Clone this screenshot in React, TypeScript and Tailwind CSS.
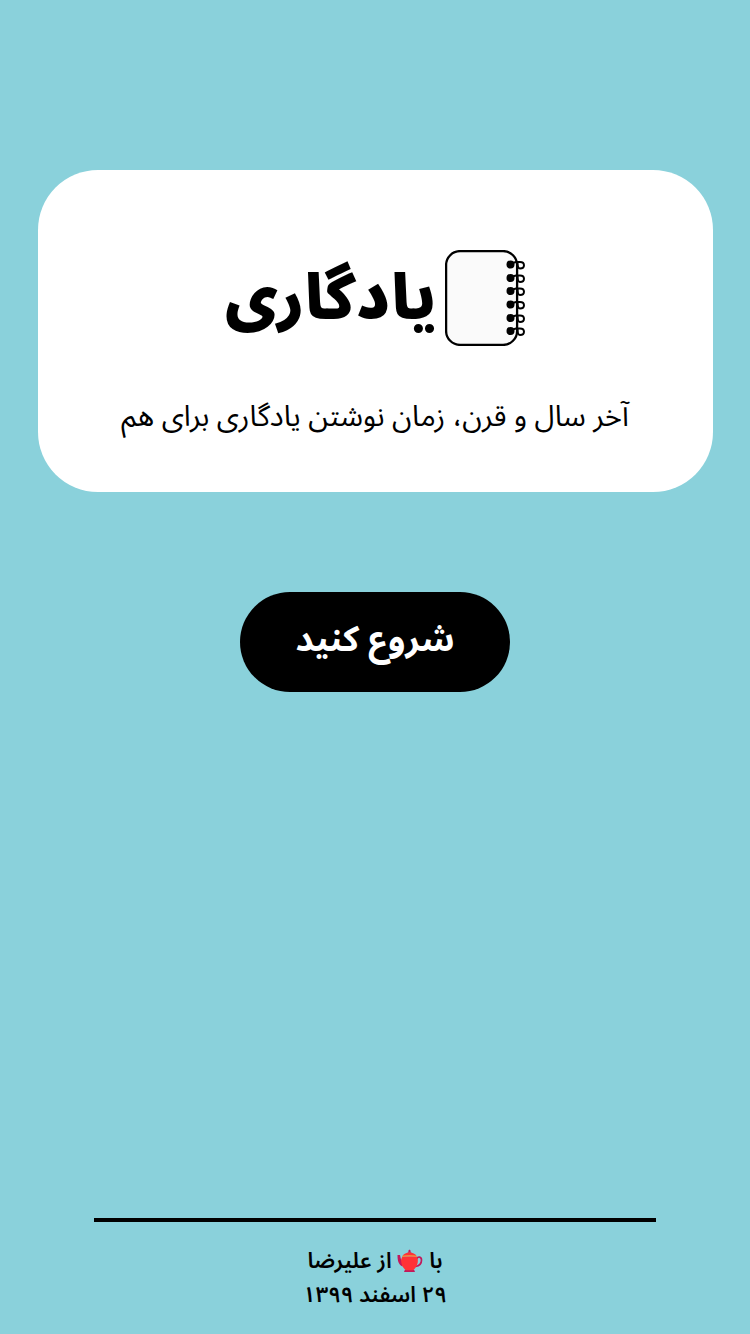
const RINGS = [14.5, 28, 41, 54.5, 68, 81];

function Notebook() {
  return (
    <svg className="h-24 w-20 shrink-0" viewBox="0 0 80 96" fill="none" stroke="#000" aria-hidden="true">
      <rect x="1.1" y="1.1" width="71" height="93.8" rx="14" fill="#fafafa" strokeWidth="2.3" />
      {RINGS.map((y) => (
        <g key={y} strokeWidth="2">
          <circle cx="65.5" cy={y} r="4" fill="#000" stroke="none" />
          <path d={`M66 ${y - 1}L71 ${y - 2.5}H75C80.3 ${y - 2.5} 80.3 ${y + 4} 75 ${y + 4}C73 ${y + 4} 72.5 ${y + 2} 72.5 ${y - 2}`} />
        </g>
      ))}
    </svg>
  );
}

function Teapot() {
  return (
    <svg className="inline-block h-6 w-[26px] align-[-5px]" viewBox="-0.5 0 26 24" role="img" aria-label="چای">
      <path d="M19 10c1.5-3 5-2.5 5 1s-2.5 6-6 6.5" fill="none" stroke="#c2185b" strokeWidth="1.7" />
      <path d="M0 6h2.5c.8 3 .5 5.5 3.5 6.5l-1 5C1 15.5 0 12 0 6Z" fill="#c2185b" />
      <path d="M7.5 20.5h9l1 2.5h-11ZM10 3.8l1-1.3c-.5-2.5 2.5-2.5 2 0l1 1.3Z" fill="#c2185b" />
      <path d="M5 7.5h14c1.2 2 1.7 3.5 1.2 6-.7 3.8-3 7-5.2 7.8H9c-2.2-.8-4.5-4-5.2-7.8-.5-2.5 0-4 1.2-6Z" fill="#ff3236" />
      <path d="M5 7.2c1-2.4 4-3.7 7-3.7s6 1.3 7 3.7Z" fill="#ff3236" />
      <path d="M4.8 7.3c3-.8 11.400-.8 14.400 0" fill="none" stroke="#f58a3c" strokeWidth="1.2" />
    </svg>
  );
}

export default function App() {
  return (
    <div
      dir="rtl"
      lang="fa"
      className="flex min-h-screen flex-col items-center bg-[#8ad1db] pt-[170px] pb-[22px] text-center font-['Noto_Sans_Arabic','DejaVu_Sans',sans-serif] text-black"
    >
      <main className="flex w-full flex-col items-center">
        <section className="flex w-9/10 flex-col items-center rounded-[60px] bg-white px-4 pt-20 pb-[50px]">
          <div className="flex items-start gap-2">
            <Notebook />
            <h1 className="text-[62px] leading-[100px] font-black">یادگاری</h1>
          </div>
          <p className="mt-[42px] text-[29px] leading-[50px]">آخر سال و قرن، زمان نوشتن یادگاری برای هم</p>
        </section>
        <button type="button" className="mt-[100px] h-[100px] w-[270px] rounded-full bg-black pb-1 text-[35px] font-bold text-white">
          شروع کنید
        </button>
      </main>
      <footer className="mt-auto w-3/4 border-t-4 border-black pt-[22px] text-[22px] leading-[34px] font-semibold">
        <p>
          با <Teapot /> از علیرضا
        </p>
        <p>۲۹ اسفند ۱۳۹۹</p>
      </footer>
    </div>
  );
}
